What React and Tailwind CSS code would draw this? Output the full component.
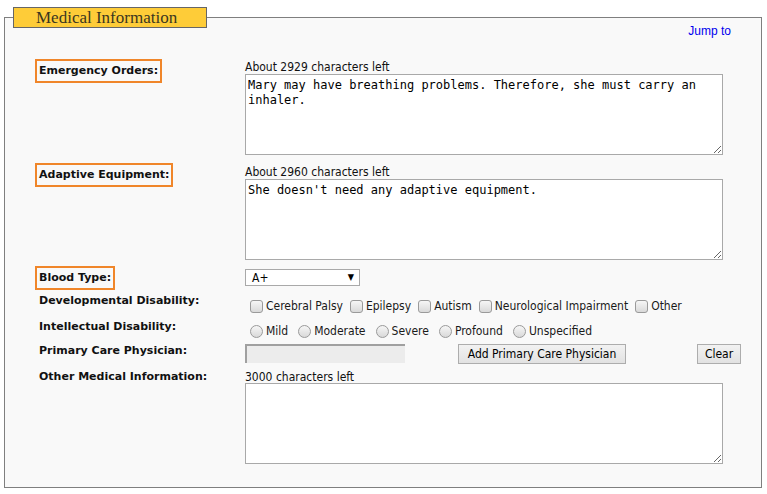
const SANS = "font-['DejaVu_Sans_Condensed','Noto_Sans',sans-serif]";
const BOLD = "font-['DejaVu_Sans','Verdana',sans-serif] font-bold text-[11px] text-[#111]";

const Boxed = ({ children }) => (
  <span className={`inline-flex items-center h-[24px] px-[2px] border-2 border-[#f0862a] ${BOLD}`}>
    {children}
  </span>
);

const Plain = ({ children }) => (
  <div className={`h-[14px] leading-[14px] pl-[4px] ${BOLD}`}>{children}</div>
);

const Check = ({ label, round }) => (
  <span className={`inline-flex items-center ${round ? "mr-[10px]" : "mr-[7px]"}`}>
    <span
      className={`w-[13px] h-[13px] border border-[#9a9a9a] bg-gradient-to-b from-[#f6f6f6] to-[#d9d9d9] ${
        round ? "rounded-full" : "rounded-[3px]"
      }`}
    />
    <span className="ml-[3px] text-[12px] text-[#1a1a1a] leading-[14px]">{label}</span>
  </span>
);

const Area = ({ value }) => (
  <textarea
    readOnly
    defaultValue={value}
    className="block w-[478px] h-[81px] bg-white border border-[#a9a9a9] px-[2px] pt-[3px] text-[12px] leading-[15px] text-black font-['DejaVu_Sans_Mono','Liberation_Mono',monospace] resize outline-none"
  />
);

const Note = ({ children }) => (
  <div className={`h-[14px] leading-[15px] text-[12px] text-[#111] ${SANS}`}>{children}</div>
);

export default function App() {
  return (
    <div className={`w-[767px] h-[494px] bg-white pl-[4px] pt-[7px] ${SANS}`}>
      <fieldset className="w-[758px] border border-[#7f7f7f] bg-[#f9f9f9] p-0 m-0 pb-[23px]">
        <legend className="ml-[8px] w-[194px] h-[21px] border border-[#666] bg-[#fecc38] pl-[22px] leading-[19px] text-[17px] text-[#3b3620] font-['Liberation_Serif','DejaVu_Serif',serif]">
          Medical Information
        </legend>

        <div className="-mt-[4px] h-[14px] leading-[14px] text-right pr-[30px] text-[12px] text-[#0000ee] font-['Liberation_Sans',Arial,sans-serif]">
          Jump to
        </div>

        <div className="flex mt-[19px]">
          <div className="w-[240px] pl-[30px]">
            <Boxed>Emergency Orders:</Boxed>
          </div>
          <div className="pt-[3px]">
            <Note>About 2929 characters left</Note>
            <Area value="Mary may have breathing problems. Therefore, she must carry an inhaler." />
          </div>
        </div>

        <div className="flex mt-[6px]">
          <div className="w-[240px] pl-[30px]">
            <Boxed>Adaptive Equipment:</Boxed>
          </div>
          <div className="pt-[4px]">
            <Note>About 2960 characters left</Note>
            <Area value="She doesn't need any adaptive equipment." />
          </div>
        </div>

        <div className="flex mt-[4px]">
          <div className="w-[240px] pl-[30px]">
            <Boxed>Blood Type:</Boxed>
          </div>
          <div className="pt-[5px]">
            <div className="w-[115px] h-[17px] bg-white border border-[#a9a9a9] flex items-center justify-between pl-[6px] pr-[5px] text-[12px] text-black">
              <span>A+</span>
              <span className="text-[9px]">▼</span>
            </div>
          </div>
        </div>

        <div className="flex mt-[4px]">
          <div className="w-[240px] pl-[30px]">
            <Plain>Developmental Disability:</Plain>
          </div>
          <div className="mt-[5px] pl-[5px] flex items-center h-[14px]">
            <Check label="Cerebral Palsy" />
            <Check label="Epilepsy" />
            <Check label="Autism" />
            <Check label="Neurological Impairment" />
            <Check label="Other" />
          </div>
        </div>

        <div className="flex mt-[7px]">
          <div className="w-[240px] pl-[30px]">
            <Plain>Intellectual Disability:</Plain>
          </div>
          <div className="mt-[4px] pl-[5px] flex items-center h-[14px]">
            <Check round label="Mild" />
            <Check round label="Moderate" />
            <Check round label="Severe" />
            <Check round label="Profound" />
            <Check round label="Unspecified" />
          </div>
        </div>

        <div className="flex mt-[6px]">
          <div className="w-[240px] pl-[30px]">
            <Plain>Primary Care Physician:</Plain>
          </div>
          <div className="flex items-start">
            <div className="w-[160px] h-[19px] bg-[#ececec] border-t-2 border-l-2 border-[#a0a0a0]" />
            <button className="ml-[53px] w-[168px] h-[20px] border border-[#adadad] bg-gradient-to-b from-[#f2f2f2] to-[#e2e2e2] text-[12px] text-black leading-[18px]">
              Add Primary Care Physician
            </button>
            <button className="ml-[71px] w-[44px] h-[20px] border border-[#adadad] bg-gradient-to-b from-[#f2f2f2] to-[#e2e2e2] text-[12px] text-black leading-[18px]">
              Clear
            </button>
          </div>
        </div>

        <div className="flex mt-[6px]">
          <div className="w-[240px] pl-[30px]">
            <Plain>Other Medical Information:</Plain>
          </div>
          <div>
            <div className={`h-[13px] leading-[14px] text-[12px] text-[#111] ${SANS}`}>3000 characters left</div>
            <Area value="" />
          </div>
        </div>
      </fieldset>
    </div>
  );
}
